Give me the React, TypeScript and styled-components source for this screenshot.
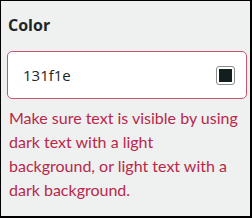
import React from 'react';
import styled, { createGlobalStyle } from 'styled-components';

const GlobalStyle = createGlobalStyle`
  html, body {
    margin: 0;
    padding: 0;
  }
  body {
    font-family: "Open Sans", "Noto Sans", sans-serif;
  }
`;

const Panel = styled.div`
  box-sizing: border-box;
  width: 252px;
  height: 218px;
  background: #eff0f0;
  border-style: solid;
  border-color: #000;
  border-width: 1px 2px 2px 1px;
  padding: 13px 3px 0 6px;
`;

const Label = styled.label`
  display: block;
  font-size: 16px;
  line-height: 22px;
  font-weight: 700;
  color: #1d2626;
  margin: 0 0 15px 1px;
`;

const InputBox = styled.div<{ $invalid?: boolean }>`
  box-sizing: border-box;
  height: 48px;
  display: flex;
  align-items: center;
  justify-content: space-between;
  background: #fff;
  border: 1px solid ${p => (p.$invalid ? '#c9566c' : '#999')};
  border-radius: 5px;
  padding: 0 11px 0 15px;
`;

const Value = styled.span`
  font-size: 15px;
  color: #1d2626;
`;

const Swatch = styled.span<{ $color: string }>`
  box-sizing: border-box;
  width: 19px;
  height: 19px;
  border: 1px solid #8c8c8c;
  border-radius: 3px;
  padding: 2px;
  background: #fff;

  &::after {
    content: '';
    display: block;
    width: 100%;
    height: 100%;
    background: ${p => p.$color};
  }
`;

const ErrorText = styled.p`
  max-width: 233.5px;
  margin: 7px 0 0 2px;
  font-family: Lato, "Noto Sans", sans-serif;
  font-size: 16px;
  line-height: 24px;
  color: #b8284a;
`;

export default function App() {
  return (
    <>
      <GlobalStyle />
      <Panel>
        <Label>Color</Label>
        <InputBox $invalid>
          <Value>131f1e</Value>
          <Swatch $color="#131f1e" />
        </InputBox>
        <ErrorText>
          Make sure text is visible by using dark text with a light background, or light text with a
          dark background.
        </ErrorText>
      </Panel>
    </>
  );
}
